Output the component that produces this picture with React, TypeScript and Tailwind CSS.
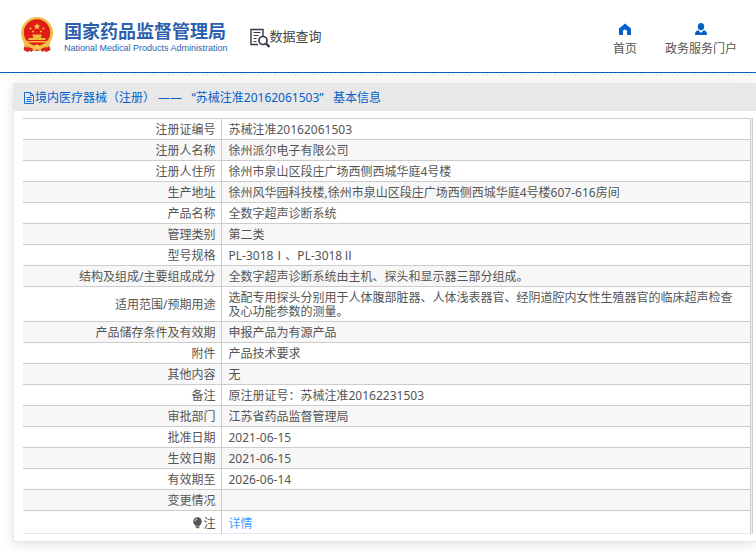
import React from 'react';

interface Row {
  label: string;
  value: string;
}

const rows: Row[] = [
  { label: '注册证编号', value: '苏械注准20162061503' },
  { label: '注册人名称', value: '徐州派尔电子有限公司' },
  { label: '注册人住所', value: '徐州市泉山区段庄广场西侧西城华庭4号楼' },
  { label: '生产地址', value: '徐州风华园科技楼,徐州市泉山区段庄广场西侧西城华庭4号楼607-616房间' },
  { label: '产品名称', value: '全数字超声诊断系统' },
  { label: '管理类别', value: '第二类' },
  { label: '型号规格', value: 'PL-3018Ⅰ、PL-3018Ⅱ' },
  { label: '结构及组成/主要组成成分', value: '全数字超声诊断系统由主机、探头和显示器三部分组成。' },
  { label: '适用范围/预期用途', value: '选配专用探头分别用于人体腹部脏器、人体浅表器官、经阴道腔内女性生殖器官的临床超声检查及心功能参数的测量。' },
  { label: '产品储存条件及有效期', value: '申报产品为有源产品' },
  { label: '附件', value: '产品技术要求' },
  { label: '其他内容', value: '无' },
  { label: '备注', value: '原注册证号：苏械注准20162231503' },
  { label: '审批部门', value: '江苏省药品监督管理局' },
  { label: '批准日期', value: '2021-06-15' },
  { label: '生效日期', value: '2021-06-15' },
  { label: '有效期至', value: '2026-06-14' },
  { label: '变更情况', value: '' },
];

const Emblem = () => (
  <svg viewBox="0 0 32 36" className="h-9 w-8 shrink-0" aria-hidden="true">
    <path d="M5 24 2.500 33l4 2 4-2 5.500 1 5.500-1 4 2 4-2L27 24z" fill="#d9251d" />
    <circle cx="16" cy="16" r="16" fill="#f0bd45" />
    <circle cx="16" cy="15.500" r="13.200" fill="#e01b16" />
    <path d="m16 6 1 2.400h2.600l-2.100 1.600.8 2.500-2.300-1.500-2.300 1.500.8-2.500-2.100-1.600H15z" fill="#f8cf4a" />
    <g fill="#f2b940">
      <circle cx="9.500" cy="11.500" r="1.100" />
      <circle cx="22.500" cy="11.500" r="1.100" />
      <circle cx="12" cy="14.500" r="1.100" />
      <circle cx="20" cy="14.500" r="1.100" />
      <path d="M12 17.500h8l1 1.500h-1v2h4l1 2H7l1-2h4v-2h-1zM5 24h22v1.500H5z" />
    </g>
    <path d="M2 24c6 4 9 2 11 6l3-2 3 2c2-4 5-2 11-6l-2.500 6-5.500 1-4 3-2-2-2 2-4-3-5.500-1z" fill="#f0bd45" />
    <circle cx="16" cy="30" r="2.400" fill="#f8cf4a" />
    <path d="m7 30 5 2-1 3-4-2zM25 30l-5 2 1 3 4-2z" fill="#d9251d" />
  </svg>
);

const SearchDocIcon = () => (
  <svg viewBox="0 0 20 20" className="size-5 shrink-0" fill="none" stroke="#3a3848" aria-hidden="true">
    <path d="M8 16.500H1v-15h12V8" strokeWidth="1.400" />
    <path d="M3.500 4.500h7M3.500 7.500h5M3.500 10.500h3M3.500 13.500h3" strokeWidth="1.100" />
    <circle cx="13" cy="12.500" r="4" strokeWidth="1.700" />
    <path d="m16 15.500 3.500 3.500" strokeWidth="2.400" />
  </svg>
);

const HomeIcon = () => (
  <svg viewBox="0 0 12 12" className="size-3" fill="#0561c6" aria-hidden="true">
    <path d="M6 .5 12 5.500V12H8V8.500a2 2 0 0 0-4 0V12H0V5.500z" />
  </svg>
);

const UserIcon = () => (
  <svg viewBox="0 0 12 12" className="size-3" fill="#0561c6" aria-hidden="true">
    <ellipse cx="6" cy="3.600" rx="3.200" ry="3.600" />
    <path d="M0 12c0-3 .8-4.200 3.300-4.700L6 10l2.700-2.700C11.200 7.800 12 9 12 12z" />
  </svg>
);

const FileIcon = () => (
  <svg viewBox="0 0 11 12" className="h-3 w-[11px] shrink-0" fill="none" stroke="#0561c6" aria-hidden="true">
    <path d="M.5.5h6l3 3v8h-9zM6.500.500v3h3M2.500 5.500h5M2.500 7.500h5M2.500 9.500h5" strokeWidth="0.900" />
  </svg>
);

const BulbIcon = () => (
  <svg viewBox="0 0 10 12" className="inline-block h-3 w-[10px] align-[-1px]" aria-hidden="true">
    <circle cx="4.500" cy="4.500" r="4.300" fill="#55565a" />
    <path d="M2.500 7.500h4V10l-1 1.200h-2l-1-1.200z" fill="#55565a" />
    <path d="M2 4.300A2.500 2.500 0 0 1 4.200 2" fill="none" stroke="#fff" strokeWidth="0.800" />
    <path d="M2.500 9.300h4" stroke="#fff" strokeWidth="0.500" />
  </svg>
);

const Header = () => (
  <header className="flex h-[73px] items-start border-b border-[#0561c6] pl-[21px] pr-[19px]">
    <a href="#" className="mt-[17px] flex items-start gap-[11px] text-[#2e5fae]">
      <Emblem />
      <span className="flex flex-col pt-1">
        <span className="text-[18px] font-bold leading-5 whitespace-nowrap">国家药品监督管理局</span>
        <span className="font-['Liberation_Sans',sans-serif] text-[9px] leading-[14px] whitespace-nowrap">
          National Medical Products Administration
        </span>
      </span>
    </a>
    <a href="#" className="ml-[22px] mt-7 flex items-start text-[#444]">
      <SearchDocIcon />
      <span className="text-[13px] leading-4 whitespace-nowrap">数据查询</span>
    </a>
    <nav className="ml-auto mt-[23px] flex gap-7 text-xs leading-4 text-[#555]">
      <a href="#" className="flex flex-col items-center gap-[6px] whitespace-nowrap">
        <HomeIcon />
        首页
      </a>
      <a href="#" className="flex flex-col items-center gap-[6px] whitespace-nowrap">
        <UserIcon />
        政务服务门户
      </a>
    </nav>
  </header>
);

const App: React.FC = () => {
  return (
    <div className="min-h-screen overflow-hidden bg-white font-['Noto_Sans','Noto_Sans_CJK_SC',sans-serif]" lang="zh-CN">
      <Header />
      <div className="h-[3px] bg-[repeating-linear-gradient(135deg,#e9e9ee_0_1px,#fff_1px_3px)]" />

      <main className="ml-[13px] mt-[7px] border-b border-l border-[#e6e6e6] bg-white pb-[7px] shadow-[0_2px_12px_rgba(0,0,0,0.12)]">
        <h1 className="flex h-7 items-center border-b border-[#e6e8f2] bg-[#e8e8e8] pl-[10px] pt-[2px] text-xs text-[#0561c6]">
          <FileIcon />
          <span className="whitespace-pre">境内医疗器械（注册） ——   “苏械注准20162061503”   基本信息</span>
        </h1>

        <div className="ml-[9px] mr-[3px] mt-[7px] border-r border-[#ccc] bg-[#f0f0f0] pr-px">
          <table className="w-full border-collapse bg-white text-xs leading-[14px] text-[#555]">
            <tbody>
              {rows.map((row) => (
                <tr key={row.label} className="border-y border-[#ccc] even:bg-[#f7f7f7]">
                  <th scope="row" className="w-[198px] border-r border-[#ccc] pb-[2px] pr-[5px] pt-1 text-right font-normal">
                    {row.label}
                  </th>
                  <td className="border-r border-[#ccc] pb-[2px] pl-[7px] pr-3 pt-1">{row.value}</td>
                </tr>
              ))}
              <tr className="border-b border-[#e6e8f2] leading-4">
                <th scope="row" className="border-r border-[#ccc] pb-px pr-[5px] pt-[5px] text-right font-normal">
                  <BulbIcon />
                  注
                </th>
                <td className="border-r border-[#ccc] pb-px pl-[7px] pt-[5px]">
                  <a href="#" className="text-[#409eff]">详情</a>
                </td>
              </tr>
            </tbody>
          </table>
        </div>
      </main>
    </div>
  );
};

export default App;
